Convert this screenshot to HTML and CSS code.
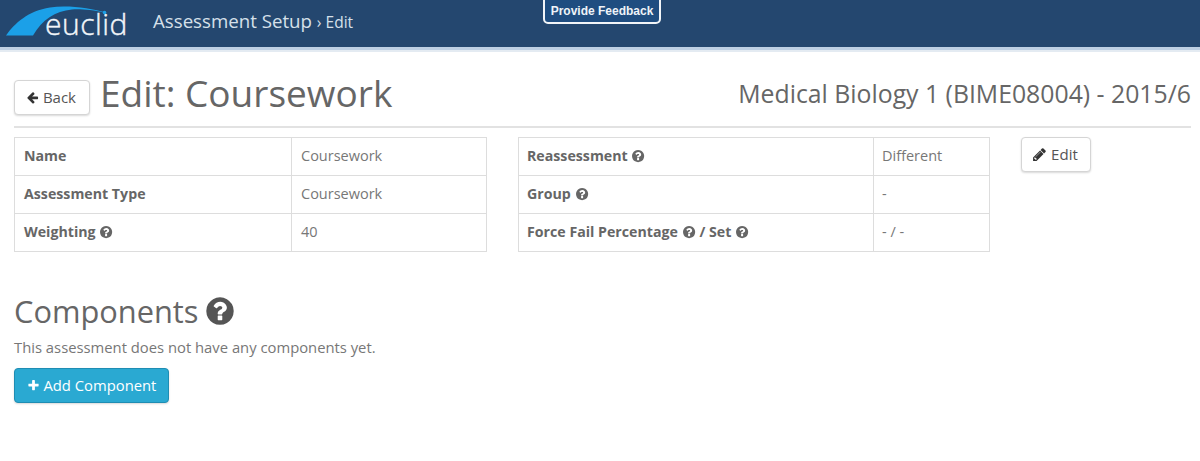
FILE: index.html
```html
<!DOCTYPE html>
<html lang="en">
<head>
  <meta charset="UTF-8" />
  <title>Edit: Coursework</title>
  <link rel="stylesheet" href="styles.css">
</head>
<body>

  <svg class="icon-defs" xmlns="http://www.w3.org/2000/svg">
    <symbol id="i-question" viewBox="0 0 1792 1792"><path d="M1024 1376v-192q0-14-9-23t-23-9h-192q-14 0-23 9t-9 23v192q0 14 9 23t23 9h192q14 0 23-9t9-23zm256-672q0-88-55.5-163t-138.5-116-170-41q-243 0-371 213-15 24 8 42l132 100q7 6 19 6 16 0 25-12 53-68 86-92 34-24 86-24 48 0 85.5 26t37.5 59q0 38-20 61t-68 45q-63 28-115.5 86.5t-52.5 125.5v36q0 14 9 23t23 9h192q14 0 23-9t9-23q0-19 21.5-49.5t54.5-49.5q32-18 49-28.5t46-35 44.5-48 28-60.5 12.5-81zm384 192q0 209-103 385.5t-279.5 279.5-385.5 103-385.5-103-279.5-279.5-103-385.5 103-385.5 279.5-279.5 385.5-103 385.5 103 279.5 279.5 103 385.5z"/></symbol>
    <symbol id="i-back" viewBox="0 0 1792 1792"><path d="M1664 896v128q0 53-32.5 90.5t-84.5 37.5h-704l293 294q38 36 38 90t-38 90l-75 76q-37 37-90 37-52 0-91-37l-651-652q-37-37-37-90 0-52 37-91l651-650q38-38 91-38 52 0 90 38l75 74q38 38 38 91t-38 91l-293 293h704q52 0 84.5 37.5t32.5 90.5z"/></symbol>
    <symbol id="i-plus" viewBox="0 0 1792 1792"><path d="M1600 736v192q0 40-28 68t-68 28h-416v416q0 40-28 68t-68 28h-192q-40 0-68-28t-28-68v-416h-416q-40 0-68-28t-28-68v-192q0-40 28-68t68-28h416v-416q0-40 28-68t68-28h192q40 0 68 28t28 68v416h416q40 0 68 28t28 68z"/></symbol>
    <symbol id="i-pencil" viewBox="0 0 1792 1792"><path d="M491 1536l91-91-235-235-91 91v107h128v128h107zm523-928q0-22-22-22-10 0-17 7l-542 542q-7 7-7 17 0 22 22 22 10 0 17-7l542-542q7-7 7-17zm-54-192l416 416-832 832h-416v-416zm683 96q0 53-37 90l-166 166-416-416 166-165q36-38 90-38 53 0 91 38l235 234q37 39 37 91z"/></symbol>
  </svg>

  <header class="navbar">
    <a class="brand">
      <svg class="brand-swoosh" viewBox="0 0 126 38" xmlns="http://www.w3.org/2000/svg">
        <path d="M6 35.500 C15 23 28 11 50 7.500 C68 5 90 8 107 13 C90 9.500 80 9 72 9.500 C55 11 42 20 33 35.500 Z" fill="#1ba0e8"/>
        <circle cx="104.500" cy="12.500" r="1.800" fill="#1ba0e8"/>
      </svg>
      <span class="brand-name">euclid</span>
    </a>
    <div class="crumbs">Assessment Setup <small>› Edit</small></div>
    <a class="feedback">Provide Feedback</a>
  </header>

  <main class="container">
    <div class="page-head">
      <a class="btn back-btn"><svg class="icon"><use href="#i-back"/></svg> Back</a>
      <h1>Edit: Coursework</h1>
      <div class="course">Medical Biology 1 (BIME08004) - 2015/6</div>
    </div>

    <div class="details">
      <table class="info left">
        <tr><th>Name</th><td>Coursework</td></tr>
        <tr><th>Assessment Type</th><td>Coursework</td></tr>
        <tr><th>Weighting <svg class="icon"><use href="#i-question"/></svg></th><td>40</td></tr>
      </table>
      <table class="info right">
        <tr><th>Reassessment <svg class="icon"><use href="#i-question"/></svg></th><td>Different</td></tr>
        <tr><th>Group <svg class="icon"><use href="#i-question"/></svg></th><td>-</td></tr>
        <tr><th>Force Fail Percentage <svg class="icon"><use href="#i-question"/></svg> / Set <svg class="icon"><use href="#i-question"/></svg></th><td>- / -</td></tr>
      </table>
      <a class="btn edit-btn"><svg class="icon"><use href="#i-pencil"/></svg> Edit</a>
    </div>

    <h2>Components <svg class="icon"><use href="#i-question"/></svg></h2>
    <p class="empty">This assessment does not have any components yet.</p>
    <a class="btn add-btn"><svg class="icon"><use href="#i-plus"/></svg> Add Component</a>
  </main>

</body>
</html>
```

FILE: styles.css
```css
html, body {
  height: 100%;
}
body {
  margin: 0;
  background: #fff;
  color: #666;
  font-family: "Open Sans", sans-serif;
  font-size: 14px;
  overflow: hidden;
}
.icon-defs {
  display: none;
}
.icon {
  width: 1em;
  height: 1em;
  fill: currentColor;
  vertical-align: -0.12em;
}

/* top bar */
.navbar {
  position: relative;
  height: 47px;
  background: #24476f;
  border-bottom: 3px solid #bdd0e4;
  box-shadow: 0 2px 0 #e4ebf2;
  display: flex;
  align-items: center;
}
.brand {
  position: relative;
  width: 153px;
  height: 47px;
  flex: none;
}
.brand-swoosh {
  position: absolute;
  left: 0;
  top: 0;
  width: 126px;
  height: 38px;
}
.brand-name {
  position: absolute;
  left: 45px;
  top: 5px;
  font-family: "Open Sans", sans-serif;
  font-weight: 300;
  font-size: 30px;
  line-height: 38px;
  letter-spacing: 0.5px;
  color: #f2f6fa;
  -webkit-text-stroke: 0.4px #f2f6fa;
}
.crumbs {
  font-size: 18.700px;
  color: #d6e0ea;
  margin-top: -7px;
}
.crumbs small {
  font-size: 15.500px;
}
.feedback {
  position: absolute;
  left: 543px;
  top: -2px;
  width: 118px;
  height: 26px;
  box-sizing: border-box;
  background: #1f4d80;
  border: 2px solid #f2f5f8;
  border-radius: 0 0 5px 5px;
  color: #eef3f8;
  font-family: "Liberation Sans", sans-serif;
  font-weight: bold;
  font-size: 12px;
  line-height: 22px;
  text-align: center;
}

/* page */
.container {
  padding: 2px 9px 0 14px;
}
.page-head {
  display: flex;
  align-items: center;
  height: 74px;
  border-bottom: 2px solid #e2e2e2;
}
h1 {
  margin: 8px 0 0 10px;
  font-size: 37px;
  font-weight: 400;
  color: #666;
  line-height: 40px;
}
.course {
  margin-left: auto;
  font-size: 24.800px;
  color: #666;
  margin-top: 8px;
}
.btn {
  display: inline-block;
  box-sizing: border-box;
  border: 1px solid #d5d5d5;
  border-radius: 4px;
  background: #fff;
  box-shadow: 0 1px 2px rgba(0,0,0,0.15);
  color: #555;
  font-size: 15px;
  line-height: 20px;
  text-align: center;
}
.back-btn {
  width: 76px;
  height: 35px;
  padding: 6px 2px 0 0;
  margin-top: 16px;
}
.back-btn .icon {
  color: #333;
  width: 13px;
  height: 13px;
  vertical-align: -1px;
}
.details {
  display: flex;
  align-items: flex-start;
  margin-top: 9px;
}
.info {
  width: 473px;
  border-collapse: collapse;
  table-layout: fixed;
  margin-right: 31px;
}
.info.right {
  width: 472px;
}
.info th,
.info td {
  height: 38px;
  box-sizing: border-box;
  border: 1px solid #ddd;
  padding: 0 8px 2px 9px;
  text-align: left;
  font-size: 14.500px;
}
.info th {
  color: #666;
  font-weight: 700;
  font-size: 14.200px;
}
.info td {
  color: #777;
  font-weight: 400;
}
.info.left th {
  width: 277px;
}
.info.right th {
  width: 355px;
}
.info.right th,
.info.right td {
  padding-left: 8px;
}
.edit-btn {
  width: 70px;
  height: 35px;
  padding: 6px 2px 0 0;
}
.edit-btn .icon {
  color: #333;
}
h2 {
  margin: 41px 0 0;
  font-size: 30.800px;
  font-weight: 400;
  line-height: 36px;
  color: #666;
}
h2 .icon {
  width: 32px;
  height: 32px;
  margin-left: -3px;
  vertical-align: -4px;
  color: #555;
}
.empty {
  margin: 8px 0 11px;
  line-height: 20px;
  font-size: 14.800px;
  color: #777;
}
.add-btn {
  width: 155px;
  height: 35px;
  padding-top: 6px;
  background: #2aa9d2;
  border-color: #1f8db3;
  color: #fff;
  font-size: 14.800px;
}
.add-btn .icon {
  width: 13px;
  height: 13px;
  vertical-align: -1px;
}
```
